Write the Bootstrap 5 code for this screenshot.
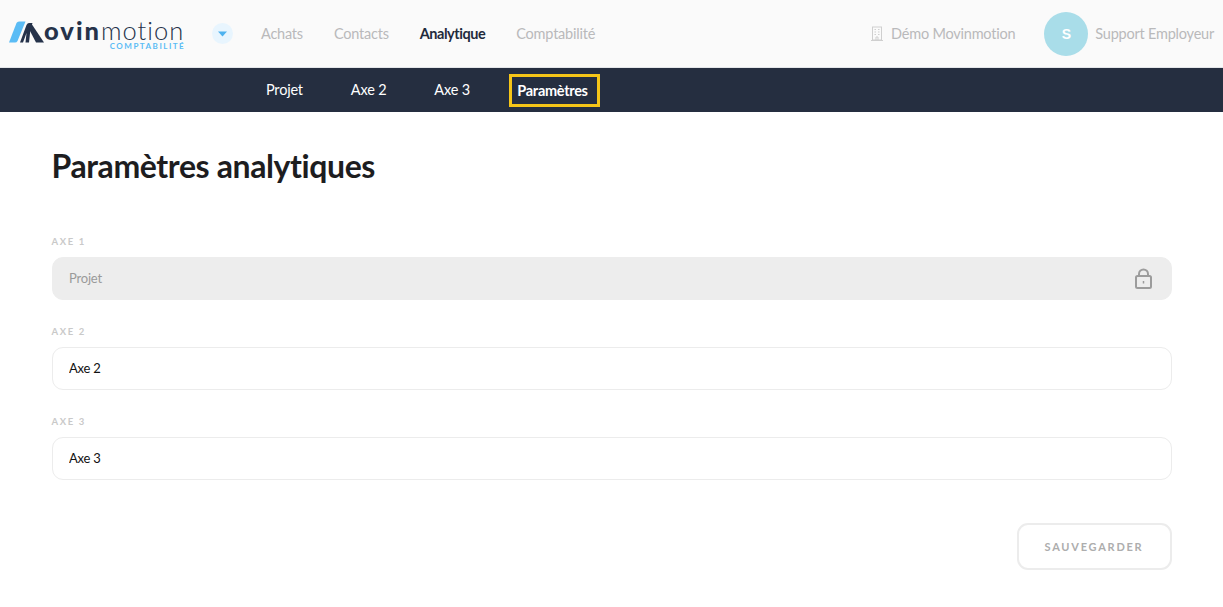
<!DOCTYPE html>
<html lang="fr">
<head>
<meta charset="utf-8">
<title>Paramètres analytiques</title>
<link href="https://cdn.jsdelivr.net/npm/bootstrap@5.3.0/dist/css/bootstrap.min.css" rel="stylesheet">
<style>
body { font-family: Lato, "Liberation Sans", sans-serif; background: #fff; color: #1d1d1f; overflow: hidden; }
.top-bar { height: 68px; background: #fafafa; padding: 0 9px; border-bottom: 1px solid #e4e6e9; }
.brand-box { width: 176px; height: 40px; margin-top: 8px; }
.brand-mark { width: 36px; height: 24px; flex: none; margin-top: 3px; }
.brand-main { font-size: 25.5px; color: #25324a; line-height: 24px; margin-left: -1px; white-space: nowrap; }
.brand-main b { font-weight: 900; letter-spacing: 2px; }
.brand-main span { font-weight: 300; letter-spacing: 1px; }
.brand-sub { font-size: 8px; font-weight: 700; letter-spacing: 1.5px; color: #5bbcf5; text-align: right; margin: 0 -1px 0 0; line-height: 9px; white-space: nowrap; }
.caret-dot { width: 21px; height: 21px; border-radius: 50%; background: #e8f5fe; margin-left: 27px; }
.main-links { gap: 31px; margin-left: 28px; }
.main-links a, .org-link { font-size: 14.5px; letter-spacing: -.22px; color: #b9b9bb; text-decoration: none; }
.main-links a.on { color: #1f2a3c; font-weight: 700; letter-spacing: -.45px; }
.face { width: 44px; height: 44px; border-radius: 50%; background: #a9dde9; color: #fff; font: 700 14px "Liberation Sans", sans-serif; margin: 0 7px 0 29px; }
.sub-bar { height: 44px; background: #252e40; padding-left: 257px; }
.sub-bar a { color: #fff; font-size: 14.5px; letter-spacing: -.2px; text-decoration: none; padding: 0 9px; }
.sub-bar a + a { margin-left: 30px; }
.sub-bar a.picked { font-weight: 700; letter-spacing: -.3px; border: 3px solid #f5c518; padding: 0 9px 0 5px; height: 33px; line-height: 27px; margin-left: 30.5px; }
.page-body { padding: 0 51.5px; }
.page-title { font-size: 32px; font-weight: 700; letter-spacing: -.4px; color: #1d1d1f; margin: 35px 0 0; line-height: 38px; }
.fields { margin-top: 51px; }
.field-tag { font-size: 9.5px; font-weight: 700; letter-spacing: 1.6px; color: #c9c9c9; line-height: 11px; margin-bottom: 10px; display: block; }
.field-wrap { margin-bottom: 26px; }
.form-control.axis { height: 43px; border-radius: 11px; border: 1px solid #ececec; font-size: 13px; letter-spacing: -.2px; padding: 0 17px 2px 16.5px; color: #111; }
.form-control.axis:disabled { background: #ededed; border-color: #ededed; color: #9a9a9a; opacity: 1; }
.lock-mark { position: absolute; right: 18.5px; top: 11px; width: 19px; height: 21px; }
.save-row { margin-top: 43px; }
.save-btn { width: 155px; height: 47px; border: 2px solid #ececec; border-radius: 11px; background: #fff; color: #adadad; font-size: 11px; font-weight: 700; letter-spacing: 1.75px; padding: 2px 0 0; }
</style>
</head>
<body>
<nav class="top-bar d-flex align-items-center">
  <div class="brand-box d-flex">
    <svg class="brand-mark" viewBox="0 0 36 24" aria-hidden="true">
      <path d="M0 21.5 L7.5 2 Q8.2 .5 10 .5 L16.5 .5 L8.5 20 Q7.8 21.5 6 21.5 L1 21.5 Z" fill="#5bbcf5"/>
      <path d="M11 21.5 L17.5 4 Q18.5 2 20 2 L23.5 2 L21.5 8 L20 21.5 L16.5 21.5 L17.5 12 L14 21.5 Z" fill="#25324a"/>
      <path d="M22 2 L35 21.5 L27 21.5 L20.5 9 Z" fill="#25324a"/>
    </svg>
    <div class="brand-words">
      <div class="brand-main"><b>ovin</b><span>motion</span></div>
      <div class="brand-sub">COMPTABILITÉ</div>
    </div>
  </div>
  <div class="caret-dot d-flex align-items-center justify-content-center">
    <svg width="9" height="6" viewBox="0 0 9 6" aria-hidden="true"><path d="M0 .5 H9 L4.5 5.5 Z" fill="#4db2ef"/></svg>
  </div>
  <div class="main-links d-flex">
    <a href="#">Achats</a>
    <a href="#">Contacts</a>
    <a href="#" class="on">Analytique</a>
    <a href="#">Comptabilité</a>
  </div>
  <div class="ms-auto d-flex align-items-center org-link">
    <svg class="me-2" width="12" height="15" viewBox="0 0 12 15" fill="none" stroke="#cfcfcf" aria-hidden="true">
      <rect x="1.5" y="1" width="9" height="13"/>
      <path d="M0 14.5 H12 M3.5 3.5 h1.5 M7 3.5 h1.5 M3.5 6 h1.5 M7 6 h1.5 M3.5 8.5 h1.5 M7 8.5 h1.5 M5 14 v-3 h2 v3"/>
    </svg>
    <span>Démo Movinmotion</span>
    <div class="face d-flex align-items-center justify-content-center">S</div>
    <span>Support Employeur</span>
  </div>
</nav>
<div class="sub-bar d-flex align-items-center">
  <a href="#">Projet</a>
  <a href="#">Axe 2</a>
  <a href="#">Axe 3</a>
  <a href="#" class="picked">Paramètres</a>
</div>
<main class="page-body">
  <h1 class="page-title">Paramètres analytiques</h1>
  <form class="fields">
    <div class="field-wrap">
      <label class="field-tag">AXE 1</label>
      <div class="position-relative">
        <input class="form-control axis" value="Projet" disabled>
        <svg class="lock-mark" viewBox="0 0 19 21" fill="none" stroke="#9c9c9c" stroke-width="2" aria-hidden="true">
          <rect x="2" y="8" width="15" height="12" rx="1.5"/>
          <path d="M5 8 V6 a4.5 4.5 0 0 1 9 0 V8"/>
          <path d="M9.5 13 v2.5" stroke-width="1.5"/>
        </svg>
      </div>
    </div>
    <div class="field-wrap">
      <label class="field-tag">AXE 2</label>
      <input class="form-control axis" value="Axe 2">
    </div>
    <div class="field-wrap mb-0">
      <label class="field-tag">AXE 3</label>
      <input class="form-control axis" value="Axe 3">
    </div>
    <div class="save-row d-flex justify-content-end">
      <button type="button" class="btn save-btn">SAUVEGARDER</button>
    </div>
  </form>
</main>
<script src="https://cdn.jsdelivr.net/npm/bootstrap@5.3.0/dist/js/bootstrap.bundle.min.js"></script>
</body>
</html>
